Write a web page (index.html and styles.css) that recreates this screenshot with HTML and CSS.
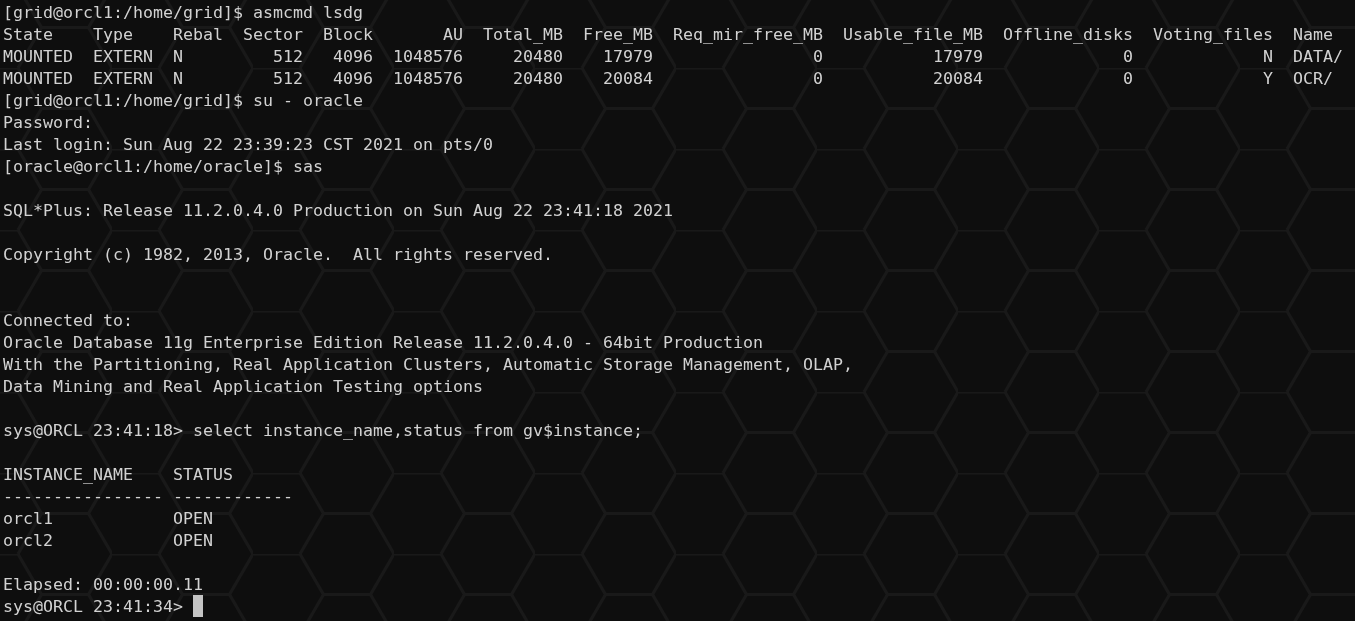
FILE: index.html
```html
<!DOCTYPE html>
<html lang="en">
<head>
<meta charset="utf-8">
<title>Terminal</title>
<link rel="stylesheet" href="styles.css">
</head>
<body>
<main class="terminal">
<svg class="backdrop" width="1355" height="621" aria-hidden="true">
<defs>
<pattern id="hex" width="141" height="81" patternUnits="userSpaceOnUse" patternTransform="translate(112 68)">
<path class="hex-line" d="M0 0H47L70.5 40.5H117.5L141 0M47 81L70.5 40.5M117.5 40.5L141 81"/>
</pattern>
</defs>
<rect width="1355" height="621" fill="url(#hex)"/>
</svg>
<pre class="output">[grid@orcl1:/home/grid]$ asmcmd lsdg
State    Type    Rebal  Sector  Block       AU  Total_MB  Free_MB  Req_mir_free_MB  Usable_file_MB  Offline_disks  Voting_files  Name
MOUNTED  EXTERN  N         512   4096  1048576     20480    17979                0           17979              0             N  DATA/
MOUNTED  EXTERN  N         512   4096  1048576     20480    20084                0           20084              0             Y  OCR/
[grid@orcl1:/home/grid]$ su - oracle
Password:
Last login: Sun Aug 22 23:39:23 CST 2021 on pts/0
[oracle@orcl1:/home/oracle]$ sas

SQL*Plus: Release 11.2.0.4.0 Production on Sun Aug 22 23:41:18 2021

Copyright (c) 1982, 2013, Oracle.  All rights reserved.


Connected to:
Oracle Database 11g Enterprise Edition Release 11.2.0.4.0 - 64bit Production
With the Partitioning, Real Application Clusters, Automatic Storage Management, OLAP,
Data Mining and Real Application Testing options

sys@ORCL 23:41:18&gt; select instance_name,status from gv$instance;

INSTANCE_NAME    STATUS
---------------- ------------
orcl1            OPEN
orcl2            OPEN

Elapsed: 00:00:00.11
sys@ORCL 23:41:34&gt; <span class="cursor"></span></pre>
</main>
</body>
</html>
```
FILE: styles.css
```css
html, body {
  margin: 0;
  height: 100%;
  background: #0e0e0e;
}

.terminal {
  position: relative;
  height: 621px;
  overflow: hidden;
  background: #0e0e0e;
}

.backdrop {
  position: absolute;
  inset: 0;
}

.hex-line {
  fill: none;
  stroke: #191919;
  stroke-width: 3;
}

.output {
  position: relative;
  margin: 0;
  padding: 2px 0 0 3px;
  font-family: "DejaVu Sans Mono", monospace;
  font-size: 16.61px;
  line-height: 22px;
  color: #d2d2d2;
  white-space: pre;
  filter: blur(0.3px);
}

.cursor {
  display: inline-block;
  width: 10px;
  height: 22px;
  margin-top: -1px;
  vertical-align: top;
  background: #c4c4c4;
}
```
